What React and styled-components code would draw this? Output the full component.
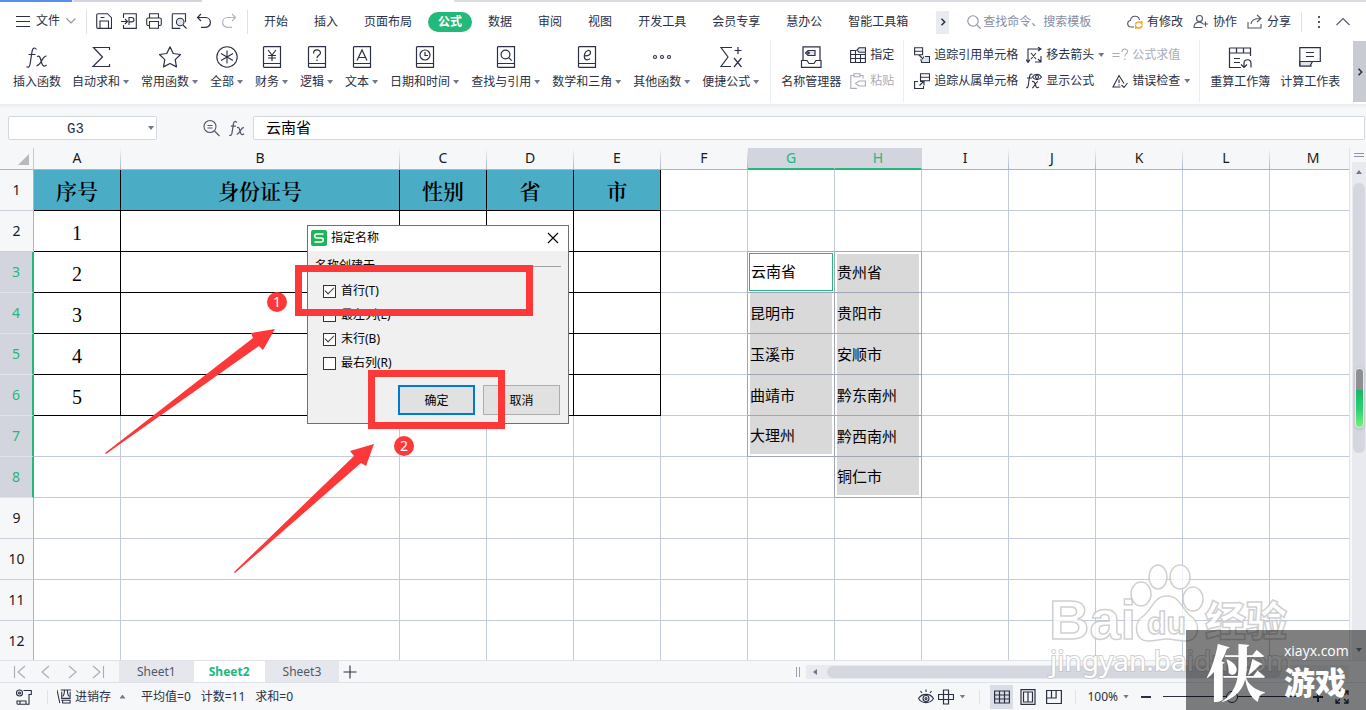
import React from "react";
import styled, { createGlobalStyle, css } from "styled-components";

const ink = "#2b3044";
const green = "#22b97a";
const red = "#fc3838";
const grid = "#c3cadc";
const chrome = "#f5f7f9";
const uiFont = `"Noto Sans", "Noto Sans CJK SC", sans-serif`;

const Global = createGlobalStyle`
  *, *::before, *::after { box-sizing: border-box; }
  body { margin: 0; overflow: hidden; font: 12px/16px ${uiFont}; color: ${ink}; background: #fff; }
  button, input { font: inherit; color: inherit; margin: 0; padding: 0; border: 0; background: none; }
  button { white-space: nowrap; cursor: pointer; }
  svg { display: block; flex: none; }
`;

const Shell = styled.div`
  position: relative;
  display: flex;
  flex-direction: column;
  height: 100vh;
  overflow: hidden;
`;

/* ---------- icons ---------- */
const Stroke = styled.svg`
  fill: none;
  stroke: ${(p) => p.$c || ink};
  stroke-width: ${(p) => p.$w || 1.1};
`;
const Icon = ({ s = 16, v, c, w, children }) => (
  <Stroke width={s} height={s} viewBox={`0 0 ${v || s} ${v || s}`} $c={c} $w={w} aria-hidden="true">
    {children}
  </Stroke>
);
const Caret = styled.i`
  flex: none;
  width: 6px;
  height: 4px;
  background: ${(p) => p.$c || "#71798f"};
  clip-path: ${(p) => (p.$up ? "polygon(50% 0, 100% 100%, 0 100%)" : "polygon(0 0, 100% 0, 50% 100%)")};
`;
const fxPath = (
  <>
    <path d="M10.500 3.500C9 1.200 6.800 1.600 6.200 4.600L4 18.500c-.5 2.500-1.800 3.200-3.500 2.300M2.500 8.500h7" />
    <path d="M11 10.500c2.200-1 2.900 0 3.700 3l1 3.500c.9 3.200 2.300 3.900 5 2M20.500 10c-2.500 0-3.500 2.500-5 5-1.700 2.800-2.500 4.800-5 4.800" />
  </>
);
const Book = ({ children }) => (
  <Icon s={22} w={1.2}>
    <path d="M3.500 .6h16v20.800h-16q-1 0-1-1V1.600q0-1 1-1zM2.500 17.500h17" />
    {children}
  </Icon>
);
const icons = {
  fx: <Icon s={22} w={1.2}>{fxPath}</Icon>,
  sum: <Icon s={22} w={1.2}><path d="M19.500 4V1.500h-16L12.500 11 3 20.500h16.500V18" /></Icon>,
  star: <Icon s={22} w={1.2}><path d="M11 .8l3.200 6.700 7.300 1-5.300 5.100 1.300 7.300L11 17.500l-6.500 3.400 1.300-7.300L.5 8.500l7.300-1z" strokeLinejoin="round" /></Icon>,
  all: <Icon s={22} w={1.1}><circle cx="11" cy="11" r="10.200" /><path d="M11 4.500v13M5 7.500l12 7M17 7.500l-12 7" /></Icon>,
  money: <Book><path d="M7 4l4 5 4-5M11 9v6M7 9.500h8M7 12h8" /></Book>,
  logic: <Book><path d="M7.500 7.500C7.500 2.800 14.500 3 14.500 6.800c0 2.500-3.500 2.400-3.500 5.200M11 13.500V15" /></Book>,
  text: <Book><path d="M6 14.500l5-10.500 5 10.500M7.500 11.500h7" /></Book>,
  date: <Book><circle cx="11" cy="9" r="5" /><path d="M11 6v3.500h3" /></Book>,
  find: <Book><circle cx="10.500" cy="8.500" r="4.400" /><path d="M13.700 11.700l3 3" /></Book>,
  math: <Book><path d="M8.500 9.800c4 .2 6.500-1.400 6-3.500-.5-2.800-4.500-2.500-5.800 1.500-1.300 4.500.8 7.700 5.300 5" /></Book>,
  more: <Icon s={22} w={1.100}><circle cx="4" cy="11" r="1.500" /><circle cx="11" cy="11" r="1.500" /><circle cx="18" cy="11" r="1.500" /></Icon>,
  quick: <Icon s={22} w={1.200}><path d="M12 1.500H1L8 11l-7 9.500h10M18 1v7M14.500 4.500h7M14 12l7.500 9M21.500 12L14 21" /></Icon>,
  manager: <Icon s={22} w={1.200}><path d="M3 14.500V.8h17v13.700M1.500 14.500H7l2 3h5l2-3h5v6.900h-19.500z" /><path d="M8 4.500h7v5H8L5.500 7z" fill="#dfe3ea" /><circle cx="8.500" cy="7" r=".8" /></Icon>,
  recalc: <Icon s={24} w={1.200}><path d="M1.500 2v19.500H13M1.500 2h21v8M1.500 7h21M8.500 2v5M15.500 2v5M6 12.500h6M6 16.500h6" /><path d="M23 21.500v-4c0-5-7-5-7 0v4M13 18.500l3 3 3-3" /></Icon>,
  calc: <Icon s={22} w={1.200}><path d="M13 20H.8V1.600h20.500V15.500h-7.500M7 6.500h8M7 10.500h8" /><path d="M1 15.500h12.500L11 20H1z" fill="#dfe3ea" /></Icon>,
  assign: <Icon><path d="M6.500 3.500H.6v12h14.800V6M.6 7.500h14.800M.6 11.500h14.800M5.500 3.500v12M10.500 7.500v8" /><path d="M9 .8h6.500v4.400H9L7 3z" fill="#dfe3ea" /></Icon>,
  paste: <Icon c="#a9acb5"><path d="M4 2.500H.8v12.900h6M10 2.500h3v3M4 .8h6v3H4zM15.400 8H9L5.500 10.500 9 13h6.400z" /></Icon>,
  traceIn: <Icon><path d="M.6.8h8v7h-8zM.6 4.200h8M5 8l5 5M9.500 9.500V13H6" /><path d="M11 9.500h4.500v6H7.500V13.500" fill="#dfe3ea" /></Icon>,
  traceOut: <Icon><path d="M6.500.8h9v7h-9zM6.500 4.200h9M5.500 12.500l4-4M6 8.500h4v4" /><path d="M4 8.500H.6v7h8.900V13" /></Icon>,
  arrows: <Icon><path d="M2 15V2h12M0 12.500l2 3 2-3M12 0l3 2-3 2M5 6l5 6M10 6l-5 6M9 15h6v-6M12 12l3 3" /></Icon>,
  show: <Icon><path d="M6.500 1.500C4.500 0 3.800 2 3.500 4L2.200 12.500c-.3 2-1 2.700-2 2M1 5h5M6 8.500c2-.6 2.500.4 3 2l1 3c.5 1.500 1.500 1.500 3 .5M12 8.500c-2 0-4 6.500-6 6.500" /><path d="M6.500 4c2-3.500 7-3.500 9 0-2 3.500-7 3.500-9 0z" /><circle cx="11" cy="4" r="1.500" /></Icon>,
  evaluate: <Icon c="#a9acb5"><path d="M.5 6.500h7M.5 9.500h7M10 5c0-4 5.500-3.800 5.500-.5 0 2.500-2.700 2.300-2.700 5M12.800 11.500V13" /></Icon>,
  error: <Icon><path d="M8.500 14H1L7 2.500l5 8M7 6.500V10M7 11.200v1.300M9.500 12l2.500 2.500L15.500 10" /></Icon>,
  save: <Icon><path d="M.7 2q0-1.300 1.300-1.300h9.500l4 4V15.400H2q-1.300 0-1.300-1.300zM4 15V8h8.500v7M4.500 4.500h4" /></Icon>,
  exportPdf: <Icon><path d="M2.500 5V.7h12.800v14.700H2.500V12M0 8.500h6M4 6l2.500 2.500L4 11M8 12V4.500h2.500q2.500 0 2.500 2.200t-2.500 2.200H8" /></Icon>,
  print: <Icon><path d="M3.500 5V.8h9V5M3.500 12.500H2Q.7 12.500.7 11V6.500Q.7 5 2.200 5h11.600q1.500 0 1.500 1.500V11q0 1.500-1.300 1.500h-1.500M3.500 8.500h9v6.800h-9z" /></Icon>,
  preview: <Icon><path d="M14.500 9V.7H2q-.7 0-.7.700v14h8" /><circle cx="9.200" cy="9" r="3.800" fill="#dfe3ea" /><path d="M12 12l3.500 3.500" /></Icon>,
  undo: <Icon w={1.200}><path d="M5 1L1.500 4.500 5 8M1.500 4.500h8c6.500 0 6.500 9.800 0 9.800H5" /></Icon>,
  redo: <Icon c="#b3b5ba" w={1.200}><path d="M11 1l3.500 3.500L11 8M14.500 4.500h-8C0 4.500 0 14.300 6.500 14.300H11" /></Icon>,
};

/* ---------- top strip and menu ---------- */
const WindowTabs = styled.div`
  display: flex;
  height: 2px;
  flex: none;
  background: #dcdde3;
`;
const WindowTab = styled.i`
  width: ${(p) => p.$w}px;
  background: ${(p) => p.$c};
`;
const MenuBar = styled.header`
  display: flex;
  align-items: center;
  flex: none;
  height: 38px;
  padding-top: 2px;
  background: #fff;
`;
const FileButton = styled.button`
  display: flex;
  align-items: center;
  gap: 6px;
  margin: 0 10px 0 16px;
  padding-bottom: 2px;
`;
const Rule = styled.i`
  flex: none;
  width: 1px;
  height: ${(p) => p.$h || 24}px;
  background: #e0e2e7;
`;
const ToolButton = styled.button`
  display: grid;
  place-items: center;
  width: 25px;
  height: 24px;
`;
const QuickTools = styled.div`
  display: flex;
  padding: 0 6px 2px 4px;
`;
const Tabs = styled.nav`
  display: flex;
  gap: 6px;
  margin-left: 6px;
`;
const Tab = styled.button`
  height: 20px;
  padding: 0 10px;
  border-radius: 10px;
  ${(p) => p.$on && css`background: ${green}; color: #fff; font-weight: 700;`}
`;
const TabScroll = styled.button`
  display: grid;
  place-items: center;
  width: 13px;
  height: 23px;
  margin-left: 18px;
  background: #e8ebef;
`;
const Search = styled.label`
  display: flex;
  flex: 1;
  align-items: center;
  gap: 2px;
  margin-left: 18px;
  input { flex: 1; width: 100px; outline: 0; }
  input::placeholder { color: #868da0; opacity: 1; }
`;
const Account = styled.div`
  display: flex;
  align-items: center;
  gap: 10px;
  padding-right: 16px;
`;
const AccountButton = styled.button`
  display: flex;
  align-items: center;
  gap: 4px;
`;

/* ---------- ribbon ---------- */
const Ribbon = styled.section`
  display: flex;
  flex: none;
  height: 64px;
  padding-left: 8px;
  background: #fff;
`;
const BigButton = styled.button`
  display: flex;
  flex-direction: column;
  align-items: center;
  gap: 6px;
  padding: 6px ${(p) => (p.$plain ? 5 : 6)}px 0;
`;
const IconSlot = styled.span`
  display: grid;
  place-items: center;
  height: 22px;
`;
const Label = styled.span`
  display: flex;
  align-items: center;
  gap: 3px;
`;
const Group = styled.div`
  display: flex;
  padding: 0 5px 0 ${(p) => p.$l || 5}px;
  margin-left: ${(p) => p.$gap || 0}px;
  border-left: 1px solid #eceef1;
  height: 62px;
`;
const Stack = styled.div`
  display: flex;
  flex-direction: column;
  gap: 10px;
  padding: 7px 4px 0;
`;
const SmallButton = styled.button`
  display: flex;
  align-items: center;
  gap: 4px;
  height: 16px;
  color: ${(p) => (p.disabled ? "#a9acb5" : ink)};
`;
const RibbonScroll = styled.button`
  display: grid;
  place-items: center;
  width: 13px;
  height: 61px;
  margin: 1px 0 0 auto;
  background: #c9cbd2;
`;

const Big = ({ icon, children, menu }) => (
  <BigButton $plain={!menu}>
    <IconSlot>{icons[icon]}</IconSlot>
    <Label>{children}{menu && <Caret />}</Label>
  </BigButton>
);
const Small = ({ icon, children, menu, disabled }) => (
  <SmallButton disabled={disabled}>{icons[icon]}{children}{menu && <Caret />}</SmallButton>
);

/* ---------- formula bar ---------- */
const FormulaBar = styled.section`
  display: flex;
  flex: none;
  height: 44px;
  padding: 12px 1px 8px 8px;
  background: linear-gradient(#e9ebed, ${chrome} 4px);
`;
const NameBox = styled.label`
  display: flex;
  align-items: center;
  width: 149px;
  height: 24px;
  padding-right: 2px;
  border: 1px solid #d5d8de;
  border-radius: 2px;
  background: #fff;
  input { flex: 1; width: 100px; padding: 2px 6px 0 0; text-align: center; font: 14px/16px "Liberation Mono", monospace; outline: 0; }
`;
const FormulaTools = styled.div`
  display: flex;
  gap: 8px;
  align-items: center;
  margin: 0 8px 0 46px;
  height: 24px;
`;
const FormulaInput = styled.input`
  && {
    flex: 1;
    height: 24px;
    padding: 0 12px 4px;
    border: 1px solid #d5d8de;
    border-radius: 2px;
    background: #fff;
    color: #000;
    font: 15px/18px "Noto Sans CJK SC", sans-serif;
    outline: 0;
  }
`;

/* ---------- sheet ---------- */
const SheetArea = styled.main`
  display: flex;
  flex: 1;
  min-height: 0;
`;
const SheetView = styled.div`
  flex: 1;
  min-width: 0;
  overflow: hidden;
  border-right: 1px solid #dfe2e8;
`;
const Grid = styled.table`
  table-layout: fixed;
  width: 1357px;
  border-collapse: separate;
  border-spacing: 0;
`;
const Head = styled.th`
  height: 22px;
  padding: 0 0 1px;
  border-bottom: ${(p) => (p.$on ? `2px solid ${green}` : "1px solid #a9b4c9")};
  border-right: 1px solid transparent;
  background: ${(p) => (p.$on ? "#d2d5dd" : `linear-gradient(to bottom, ${chrome}, #a9b4c9) right / 1px 100% no-repeat, ${chrome}`)};
  background-origin: border-box;
  color: ${(p) => (p.$on ? green : "#1a1a1a")};
  font: 14px/18px "Noto Sans", sans-serif;
`;
const Corner = styled.th`
  height: 22px;
  padding: 0;
  border-bottom: 1px solid #a9b4c9;
  border-right: 1px solid #c3cadc;
  background: ${chrome};
`;
const CornerMark = styled.i`
  display: block;
  width: 11px;
  height: 11px;
  margin: 2px 4px 0 auto;
  background: #b9babd;
  clip-path: polygon(100% 0, 100% 100%, 0 100%);
`;
const RowHead = styled.th`
  height: 41px;
  padding: 0;
  border-right: ${(p) => (p.$on ? `2px solid ${green}` : "1px solid #a9b4c9")};
  border-bottom: 1px solid ${(p) => (p.$on ? "#dfe2e8" : "#c9cfdd")};
  background: ${(p) => (p.$on ? "#d2d5dd" : chrome)};
  color: ${(p) => (p.$on ? green : "#1a1a1a")};
  font: 14px/18px "Noto Sans", sans-serif;
`;
const Cell = styled.td`
  height: 41px;
  padding: 0;
  border-right: 1px solid ${grid};
  border-bottom: 1px solid ${grid};
  ${(p) => p.$kind === "ruled" && css`
    border-color: #000;
    color: #000;
    text-align: center;
    font: 20px/24px "Liberation Serif", serif;
    padding-top: 4px;
  `}
  ${(p) => p.$kind === "title" && css`
    border-color: #000;
    background: #4bacc6;
    color: #000;
    text-align: center;
    font: 600 21px/24px "Noto Serif CJK SC", "Noto Sans CJK SC", serif;
  `}
  ${(p) => p.$kind === "picked" && css`
    border-color: #a0a6b8;
    vertical-align: ${(p.$last && "top") || "bottom"};
  `}
  ${(p) => p.$kind === "above" && css`border-bottom-color: #a0a6b8;`}
  ${(p) => p.$kind === "beside" && css`border-right-color: #a0a6b8;`}
`;
const Picked = styled.div`
  display: flex;
  align-items: center;
  height: ${(p) => (p.$short ? 38 : 40)}px;
  margin: 0 2px;
  padding-bottom: ${(p) => (p.$first ? 2 : 0)}px;
  background: #d9d9d9;
  color: #000;
  font: 15px/20px "Noto Sans CJK SC", sans-serif;
  ${(p) => p.$active && css`
    margin: 0 1px 1px;
    padding-left: 1px;
    border: 1px solid ${green};
    background: #fff;
  `}
`;
const VScroll = styled.aside`
  display: flex;
  flex-direction: column;
  align-items: center;
  width: 16px;
  padding-left: 2px;
  background: ${chrome};
`;
const SplitGrip = styled.i`
  width: 10px;
  height: 4px;
  margin: 5px 0;
  border: solid #8a93a8;
  border-width: 1px 0;
`;
const VTrack = styled.div`
  display: flex;
  flex: 1;
  flex-direction: column;
  align-items: center;
  justify-content: space-between;
  width: 14px;
  padding: 8px 0;
  background: #e8eaef;
`;
const VThumb = styled.div`
  display: flex;
  flex-direction: column;
  align-items: center;
  width: 12px;
  height: 270px;
  margin: 9px 0 auto;
  padding-top: 185px;
  border-radius: 6px;
  background: #d4d7df;
`;
const Gauge = styled.i`
  width: 9px;
  height: 60px;
  border: 1px solid #e6e8eb;
  border-radius: 4px;
  background: linear-gradient(#8e8f93 21px, #17b765 21px, #2bcf74 40px, #77ee7c);
  box-shadow: 0 1px 3px #b0b4bc;
`;

/* ---------- bottom bars ---------- */
const SheetBar = styled.nav`
  display: flex;
  flex: none;
  align-items: center;
  height: 22px;
  border-top: 1px solid #dfe2e8;
  background: ${chrome};
`;
const SheetNav = styled.div`
  display: flex;
  gap: 10px;
  padding: 0 13px 0 12px;
`;
const NavButton = styled.button`
  width: 16px;
  height: 16px;
`;
const SheetTab = styled.button`
  align-self: stretch;
  padding: 0 ${(p) => (p.$on ? 15 : 18)}px;
  background: ${(p) => (p.$on ? "#fff" : "#e5e7ec")};
  color: ${(p) => (p.$on ? green : "#50576b")};
  font-weight: ${(p) => (p.$on ? 700 : 400)};
`;
const AddSheet = styled.button`
  margin: 0 auto 0 4px;
`;
const HScroll = styled.div`
  display: flex;
  align-items: center;
  width: 570px;
`;
const HGrip = styled.i`
  width: 4px;
  height: 10px;
  margin-right: 6px;
  border: solid #9aa2b5;
  border-width: 0 1px;
`;
const HTrack = styled.div`
  display: flex;
  flex: 1;
  align-items: center;
  height: 14px;
  padding-left: 6px;
  margin-right: 17px;
  background: #e8eaef;
`;
const HThumb = styled.i`
  width: 454px;
  height: 12px;
  margin-left: 9px;
  border-radius: 6px;
  background: #d4d7df;
`;
const StatusBar = styled.footer`
  display: flex;
  flex: none;
  align-items: center;
  height: 28px;
  border-top: 1px solid #dfe2e8;
  background: ${chrome};
`;
const StatusButton = styled.button`
  display: flex;
  align-items: center;
  justify-content: center;
  gap: ${(p) => p.$gap || 3}px;
  height: 24px;
  min-width: 23px;
  background: ${(p) => (p.$on ? "#d9dee6" : "none")};
`;
const Stats = styled.div`
  display: flex;
  gap: 10px;
  margin: 0 auto 0 6px;
`;
const StatusGroup = styled.div`
  display: flex;
  align-items: center;
  gap: ${(p) => p.$gap}px;
  padding: 0 ${(p) => p.$end || p.$pad}px 0 ${(p) => p.$pad}px;
`;
const Zoom = styled.input`
  && {
    appearance: none;
    width: 138px;
    height: 14px;
    background: linear-gradient(${ink}, ${ink}) center / 100% 1px no-repeat;
  }
  &::-webkit-slider-thumb {
    appearance: none;
    width: 12px;
    height: 12px;
    border: 1px solid ${ink};
    border-radius: 50%;
    background: ${chrome};
  }
`;

/* ---------- dialog ---------- */
const Dialog = styled.section`
  position: absolute;
  left: 307px;
  top: 225px;
  width: 262px;
  border: 1px solid #6f7072;
  background: #f0f0f0;
  color: #000;
`;
const DialogTitle = styled.header`
  display: flex;
  align-items: center;
  gap: 4px;
  height: 25px;
  padding: 0 9px 1px 3px;
  background: #fff;
  button { margin-left: auto; }
`;
const Options = styled.fieldset`
  margin: 7px 7px 0;
  padding: 5px 8px 0;
  border: 0;
  border-top: 1px solid #a0a0a0;
  legend { margin-left: -8px; padding: 0 2px 0 0; }
`;
const Option = styled.label`
  display: flex;
  align-items: center;
  gap: 5px;
  height: 24px;
  line-height: 18px;
`;
const Check = styled.input`
  && {
    appearance: none;
    display: grid;
    place-items: center;
    width: 13px;
    height: 13px;
    border: 1px solid #333;
    background: #fff;
  }
  &:checked::after {
    content: "";
    width: 9px;
    height: 5px;
    border: solid #333;
    border-width: 0 0 1px 1px;
    transform: rotate(-45deg);
    margin-bottom: 3px;
  }
`;
const DialogActions = styled.footer`
  display: flex;
  justify-content: flex-end;
  gap: 8px;
  padding: 10px 8px 8px;
`;
const DialogButton = styled.button`
  && {
    width: 77px;
    height: 30px;
    padding-top: 1px;
    border: ${(p) => (p.$main ? "2px solid #0078d7" : "1px solid #adadad")};
    background: #e1e1e1;
  }
`;

/* ---------- annotations and marks ---------- */
const Notes = styled.svg`
  position: absolute;
  left: 0;
  top: 0;
  pointer-events: none;
`;
const BaiduMark = styled.svg`
  position: absolute;
  right: 76px;
  bottom: 20px;
  pointer-events: none;
`;
const SiteMark = styled.div`
  position: absolute;
  right: 0;
  bottom: 0;
  display: flex;
  align-items: center;
  gap: 14px;
  width: 180px;
  height: 80px;
  padding-left: 16px;
  background: rgba(0, 0, 0, 0.5);
  color: #fff;
  pointer-events: none;
`;
const SiteGlyph = styled.span`
  width: 68px;
  text-align: center;
  font: 900 60px/80px "Noto Serif CJK SC", "Noto Sans CJK SC", serif;
`;
const SiteText = styled.div`
  font: 14px/18px "Open Sans", sans-serif;
  strong { display: block; margin-top: 4px; font: 900 31px/34px "Noto Sans CJK SC", sans-serif; }
`;

const columns = ["A", "B", "C", "D", "E", "F", "G", "H", "I", "J", "K", "L", "M"];
const headings = ["序号", "身份证号", "性别", "省", "市"];
const lists = {
  6: ["云南省", "昆明市", "玉溪市", "曲靖市", "大理州"],
  7: ["贵州省", "贵阳市", "安顺市", "黔东南州", "黔西南州", "铜仁市"],
};

function SheetCell({ r, c }) {
  if (r === 1 && c < 5) return <Cell $kind="title">{headings[c]}</Cell>;
  if (r <= 6 && c < 5) return <Cell $kind="ruled">{c === 0 ? r - 1 : ""}</Cell>;
  const list = lists[c];
  const i = r - 3;
  if (list && i >= 0 && i < list.length) {
    const last = i === list.length - 1;
    return (
      <Cell $kind="picked" $last={last}>
        <Picked $short={i === 0 || last} $first={i === 0} $active={i === 0 && c === 6}>{list[i]}</Picked>
      </Cell>
    );
  }
  if (r === 2 && list) return <Cell $kind="above" />;
  if ((c === 5 && r >= 3 && r <= 7) || (c === 6 && r === 8)) return <Cell $kind="beside" />;
  return <Cell />;
}

function Sheet() {
  return (
    <Grid>
      <colgroup>
        <col style={{ width: 34 }} />
        {columns.map((c) => <col key={c} style={{ width: c === "B" ? 279 : 87 }} />)}
      </colgroup>
      <thead>
        <tr>
          <Corner aria-label="全选"><CornerMark /></Corner>
          {columns.map((c) => <Head key={c} $on={c === "G" || c === "H"}>{c}</Head>)}
        </tr>
      </thead>
      <tbody>
        {Array.from({ length: 12 }, (_, i) => i + 1).map((r) => (
          <tr key={r}>
            <RowHead $on={r >= 3 && r <= 8}>{r}</RowHead>
            {columns.map((c, i) => <SheetCell key={c} r={r} c={i} />)}
          </tr>
        ))}
      </tbody>
    </Grid>
  );
}

function NameDialog() {
  return (
    <Dialog role="dialog" aria-label="指定名称">
      <DialogTitle>
        <svg width="16" height="16" viewBox="0 0 16 16" aria-hidden="true">
          <rect width="16" height="16" rx="2" fill="#1fb45a" />
          <path d="M12.500 4H6q-2.300 0-2.300 2T6 8h4q2.300 0 2.300 2T10 12H3.500" fill="none" stroke="#fff" strokeWidth="1.600" />
        </svg>
        指定名称
        <button aria-label="关闭"><Icon s={12} c="#000"><path d="M1 1l10 10M11 1L1 11" /></Icon></button>
      </DialogTitle>
      <Options>
        <legend>名称创建于</legend>
        <Option><Check type="checkbox" defaultChecked />首行(T)</Option>
        <Option><Check type="checkbox" />最左列(L)</Option>
        <Option><Check type="checkbox" defaultChecked />末行(B)</Option>
        <Option><Check type="checkbox" />最右列(R)</Option>
      </Options>
      <DialogActions>
        <DialogButton $main>确定</DialogButton>
        <DialogButton>取消</DialogButton>
      </DialogActions>
    </Dialog>
  );
}

const noteText = { fill: "#fff", fontSize: 14, textAnchor: "middle", fontFamily: "Noto Sans, sans-serif" };

export default function App() {
  return (
    <Shell>
      <Global />
      <WindowTabs>
        <WindowTab $w={72} $c="#5b8def" />
        <WindowTab $w={2} $c="#eceef2" />
        <WindowTab $w={128} $c="#d5d6dd" />
        <WindowTab $w={252} $c="#ffffff" />
      </WindowTabs>
      <MenuBar>
        <FileButton>
          <Icon s={14}><path d="M0 2.500h14M0 7.500h14M0 12.500h14" /></Icon>
          文件
          <Icon s={10} c="#8c93a3"><path d="M.5 2.500L5 7l4.500-4.500" /></Icon>
        </FileButton>
        <Rule />
        <QuickTools>
          {[["save", "保存"], ["exportPdf", "输出为PDF"], ["print", "打印"], ["preview", "打印预览"], ["undo", "撤销"], ["redo", "恢复"]].map(([k, t]) => (
            <ToolButton key={k} aria-label={t}>{icons[k]}</ToolButton>
          ))}
        </QuickTools>
        <Rule />
        <Tabs>
          {["开始", "插入", "页面布局", "公式", "数据", "审阅", "视图", "开发工具", "会员专享", "慧办公", "智能工具箱"].map((t) => (
            <Tab key={t} $on={t === "公式"}>{t}</Tab>
          ))}
        </Tabs>
        <TabScroll aria-label="更多选项卡"><Icon s={8} w={1.500}><path d="M2.500 .8L5.700 4 2.500 7.200" /></Icon></TabScroll>
        <Search>
          <Icon s={14} c="#8c93a3"><circle cx="6" cy="6" r="5.200" /><path d="M10 10l3.800 3.800" /></Icon>
          <input aria-label="查找命令" placeholder="查找命令、搜索模板" />
        </Search>
        <Account>
          <AccountButton>
            <Icon c="#50576b"><path d="M7 13H4.500C-.5 13-.3 7 3.500 6.500 4 1 11.500 1 12.500 6" /><path d="M8.500 10.500c.6-3 4.500-3.500 6.300-1V7M15 11.500c-.6 3-4.500 3.500-6.300 1V15" stroke="#f5a623" strokeWidth="1.500" /></Icon>
            有修改
          </AccountButton>
          <AccountButton>
            <Icon c="#50576b"><circle cx="6.500" cy="4.500" r="3" /><path d="M9.500 13.500H1c0-6 7-6.500 9-3.500M12.500 7.500v5M10 10h5" /></Icon>
            协作
          </AccountButton>
          <AccountButton>
            <Icon c="#50576b"><path d="M1 8v6h13v-4M4 10c.5-4 3-5.500 9-5.500M10 1l4 3.500L10 8" /></Icon>
            分享
          </AccountButton>
          <Rule $h={20} />
          <Icon s={14} c="#50576b" w={2}><path d="M7 1v2M7 6v2M7 11v2" /></Icon>
          <Icon s={14} c="#50576b"><path d="M.5 10L7 3.500l6.500 6.500" /></Icon>
        </Account>
      </MenuBar>

      <Ribbon>
        <Big icon="fx">插入函数</Big>
        <Big icon="sum" menu>自动求和</Big>
        <Big icon="star" menu>常用函数</Big>
        <Big icon="all" menu>全部</Big>
        <Big icon="money" menu>财务</Big>
        <Big icon="logic" menu>逻辑</Big>
        <Big icon="text" menu>文本</Big>
        <Big icon="date" menu>日期和时间</Big>
        <Big icon="find" menu>查找与引用</Big>
        <Big icon="math" menu>数学和三角</Big>
        <Big icon="more" menu>其他函数</Big>
        <Big icon="quick" menu>便捷公式</Big>
        <Group $gap={5}>
          <Big icon="manager">名称管理器</Big>
          <Stack>
            <Small icon="assign">指定</Small>
            <Small icon="paste" disabled>粘贴</Small>
          </Stack>
        </Group>
        <Group $l={6}>
          <Stack>
            <Small icon="traceIn">追踪引用单元格</Small>
            <Small icon="traceOut">追踪从属单元格</Small>
          </Stack>
          <Stack>
            <Small icon="arrows" menu>移去箭头</Small>
            <Small icon="show">显示公式</Small>
          </Stack>
          <Stack>
            <Small icon="evaluate" disabled>公式求值</Small>
            <Small icon="error" menu>错误检查</Small>
          </Stack>
        </Group>
        <Group>
          <Big icon="recalc">重算工作簿</Big>
          <Big icon="calc">计算工作表</Big>
        </Group>
        <RibbonScroll aria-label="更多命令"><Icon s={8} w={1.500}><path d="M2.500 .8L5.700 4 2.500 7.200" /></Icon></RibbonScroll>
      </Ribbon>

      <FormulaBar>
        <NameBox>
          <input aria-label="名称框" defaultValue="G3" />
          <Caret />
        </NameBox>
        <FormulaTools>
          <Icon s={18} c="#50576b"><circle cx="7" cy="7.500" r="6" /><path d="M11.500 12l5 5M4.500 6.500h5M4.500 9h5" /></Icon>
          <Icon s={16} v={22} c="#50576b" w={1.700}>{fxPath}</Icon>
        </FormulaTools>
        <FormulaInput aria-label="编辑栏" defaultValue="云南省" />
      </FormulaBar>

      <SheetArea>
        <SheetView><Sheet /></SheetView>
        <VScroll>
          <SplitGrip />
          <VTrack>
            <Caret $up />
            <VThumb><Gauge /></VThumb>
            <Caret />
          </VTrack>
        </VScroll>
      </SheetArea>

      <SheetBar>
        <SheetNav>
          {[["首个", "M2.500 2v12M13 2L6 8l7 6"], ["上一个", "M11 2L4 8l7 6"], ["下一个", "M5 2l7 6-7 6"], ["末个", "M3 2l7 6-7 6M13.500 2v12"]].map(([t, d]) => (
            <NavButton key={t} aria-label={t}><Icon c="#a9acb5"><path d={d} /></Icon></NavButton>
          ))}
        </SheetNav>
        <SheetTab>Sheet1</SheetTab>
        <SheetTab $on>Sheet2</SheetTab>
        <SheetTab>Sheet3</SheetTab>
        <AddSheet aria-label="新建工作表"><Icon s={14}><path d="M7 .5v13M.5 7h13" /></Icon></AddSheet>
        <HScroll>
          <HGrip />
          <HTrack>
            <Icon s={6} c="none"><path d="M5 0v6L1 3z" fill="#71798f" /></Icon>
            <HThumb />
          </HTrack>
        </HScroll>
      </SheetBar>

      <StatusBar>
        <StatusGroup $gap={0} $pad={12}>
          <StatusButton aria-label="录制宏"><Icon><circle cx="3.500" cy="4" r="3" /><circle cx="3.500" cy="4" r="1" /><path d="M7.500 1.500h7.800v4H13v9.800H4V12M1 12h9v3.300H2q-1 0-1-1z" /></Icon></StatusButton>
        </StatusGroup>
        <Rule $h={14} />
        <StatusGroup $gap={0} $pad={9} $end={1}>
          <StatusButton $gap={3}>
            <Icon s={15} v={16}><path d="M0 1l3 14M4 1h11M5 3v7h9V3M8 1c0 4-1 6-2 7M11 1c0 4 1 6 2 7M4.500 12h10M6 12v3h8v-3" /></Icon>
            进销存
          </StatusButton>
          <StatusButton aria-label="展开"><Caret $up /></StatusButton>
        </StatusGroup>
        <Stats>
          <span>平均值=0</span>
          <span>计数=11</span>
          <span>求和=0</span>
        </Stats>
        <StatusGroup $gap={1} $pad={14}>
          <StatusButton aria-label="护眼模式"><Icon><path d="M.5 9.500c3.500-5.500 11.500-5.500 15 0-3.500 5.500-11.500 5.500-15 0zM8 .5V3M2.500 2l1.500 2M13.500 2L12 4" /><circle cx="8" cy="9.500" r="3" /><circle cx="8" cy="9.500" r="1" /></Icon></StatusButton>
          <StatusButton aria-label="阅读模式" $gap={5}><Icon w={1.200}><path d="M5.500 1h5v4.500h5v5h-5V15h-5v-4.500h-5v-5h5zM5.500 5.500h5v5h-5z" /></Icon><Caret /></StatusButton>
        </StatusGroup>
        <Rule $h={14} />
        <StatusGroup $gap={3} $pad={10}>
          <StatusButton $on aria-label="普通视图"><Icon w={1.200}><path d="M.6 2h14.800v12H.6zM.6 6h14.800M.6 10h14.800M5.500 2v12M10.500 2v12" /></Icon></StatusButton>
          <StatusButton aria-label="分页预览"><Icon w={1.200}><path d="M1 .7h14v14.600H1zM3.500 3h9v10h-9zM8 3v10" /></Icon></StatusButton>
          <StatusButton aria-label="页面布局视图"><Icon w={1.200}><path d="M.6 1.500h14.800v13H.6zM.6 9h9.500V1.500M5.500 1.500V9" /></Icon></StatusButton>
        </StatusGroup>
        <Rule $h={14} />
        <StatusGroup $gap={12} $pad={11} $end={17}>
          <StatusButton $gap={5}>100%<Caret /></StatusButton>
          <button aria-label="缩小"><Icon s={10} w={2}><path d="M0 5h10" /></Icon></button>
          <Zoom type="range" aria-label="缩放" min="0" max="200" defaultValue="100" />
          <button aria-label="放大"><Icon s={10} w={2}><path d="M0 5h10M5 0v10" /></Icon></button>
          <button aria-label="全屏"><Icon s={14} w={1.300}><path d="M1 5V1h4M9 1h4v4M13 9v4H9M5 13H1V9M1 1l4 4M13 1L9 5M13 13L9 9M1 13l4-4" /></Icon></button>
        </StatusGroup>
      </StatusBar>

      <NameDialog />

      <Notes width="600" height="600" viewBox="0 0 600 600">
        <g fill="none" stroke={red} strokeWidth="7">
          <rect x="298.500" y="268.500" width="231" height="44" />
          <rect x="371.500" y="373.500" width="130" height="52" />
        </g>
        <g fill={red}>
          <path d="M105 453L253 338l-2-5 24-4-12 21-4-4L106 454z" />
          <path d="M234 572L354 456l-4-5 24-7-8 22-5-3L235 573z" />
          <circle cx="277" cy="302" r="10" />
          <circle cx="404" cy="446" r="10" />
        </g>
        <text x="277" y="307" {...noteText}>1</text>
        <text x="404" y="451" {...noteText}>2</text>
      </Notes>

      <BaiduMark width="244" height="130" viewBox="0 0 244 130">
        <g fill="#fff" fillOpacity=".75" stroke="#c4c4c4" strokeWidth="1.500" strokeOpacity=".8">
          <text x="3" y="79" fontSize="56" fontWeight="700" fontFamily="Liberation Sans, sans-serif">Bai</text>
          <ellipse cx="95" cy="34" rx="10" ry="12" />
          <ellipse cx="112" cy="17" rx="9" ry="12" />
          <ellipse cx="134" cy="17" rx="10" ry="12" />
          <ellipse cx="147" cy="39" rx="10" ry="12" />
          <path d="M121 36c14 0 15 15 25 21 9 7 7 24-6 24-8 0-12-2-19-2s-11 2-19 2c-13 0-15-17-6-24 10-6 11-21 25-21z" />
          <text x="101" y="74" fontSize="32" fontWeight="700" fontFamily="Liberation Sans, sans-serif">du</text>
          <text x="159" y="76" fontSize="41" fontWeight="900" fontFamily="Noto Sans CJK SC, sans-serif">经验</text>
          <text x="4" y="111" fontSize="28" paintOrder="stroke" strokeWidth="2" fillOpacity="1" fontFamily="Noto Sans, sans-serif">jingyan.baidu.com</text>
        </g>
      </BaiduMark>
      <SiteMark>
        <SiteGlyph>侠</SiteGlyph>
        <SiteText>xiayx.com<strong>游戏</strong></SiteText>
      </SiteMark>
    </Shell>
  );
}
